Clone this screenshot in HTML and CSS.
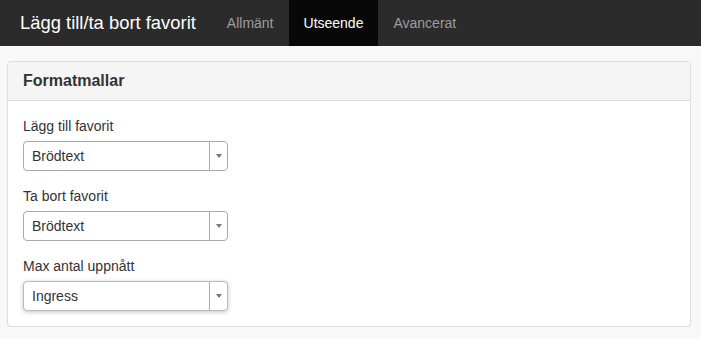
FILE: index.html
```html
<!DOCTYPE html>
<html lang="sv">
<head>
<meta charset="utf-8">
<title>Lägg till/ta bort favorit</title>
<link rel="stylesheet" href="styles.css">
</head>
<body>
<nav class="navbar">
  <span class="brand">Lägg till/ta bort favorit</span>
  <ul class="nav">
    <li><a class="nav-link">Allmänt</a></li>
    <li><a class="nav-link active">Utseende</a></li>
    <li><a class="nav-link">Avancerat</a></li>
  </ul>
</nav>
<main class="content">
  <section class="panel">
    <header class="panel-heading"><h3 class="panel-title">Formatmallar</h3></header>
    <div class="panel-body">
      <div class="form-group">
        <label class="label">Lägg till favorit</label>
        <div class="select"><span class="select-text">Brödtext</span><span class="select-arrow"><span class="tri"></span></span></div>
      </div>
      <div class="form-group">
        <label class="label">Ta bort favorit</label>
        <div class="select"><span class="select-text">Brödtext</span><span class="select-arrow"><span class="tri"></span></span></div>
      </div>
      <div class="form-group last">
        <label class="label">Max antal uppnått</label>
        <div class="select focused"><span class="select-text">Ingress</span><span class="select-arrow"><span class="tri"></span></span></div>
      </div>
    </div>
  </section>
</main>
</body>
</html>
```

FILE: styles.css
```css
* { box-sizing: border-box; }
html, body { margin: 0; padding: 0; }
body {
  background: #f8f8f8;
  font-family: "Liberation Sans", Arial, Helvetica, sans-serif;
  font-size: 14px;
  color: #333;
  line-height: 20px;
}
.navbar {
  display: flex;
  align-items: stretch;
  height: 46px;
  background: #2b2b2b;
}
.brand {
  display: flex;
  align-items: center;
  padding: 0 15px 0 20px;
  font-size: 18.4px;
  color: #fff;
}
.nav {
  display: flex;
  list-style: none;
  margin: 0;
  padding: 0 0 0 1px;
}
.nav li { display: flex; }
.nav-link {
  display: flex;
  align-items: center;
  padding: 0 15px;
  color: #9d9d9d;
  font-size: 14px;
}
.nav-link.active {
  background: #080808;
  color: #fff;
}
.content {
  padding: 15px 10px 0 7px;
}
.panel {
  background: #fff;
  border: 1px solid #ddd;
  border-radius: 4px;
  box-shadow: 0 1px 1px rgba(0,0,0,0.05);
}
.panel-heading {
  background: #f5f5f5;
  border-bottom: 1px solid #ddd;
  border-radius: 3px 3px 0 0;
  height: 39px;
  padding: 0 15px;
  display: flex;
  align-items: center;
}
.panel-title {
  margin: 0;
  font-size: 16px;
  font-weight: bold;
  color: #333;
  line-height: 18px;
}
.panel-body {
  padding: 15px;
}
.form-group {
  display: flex;
  flex-direction: column;
  align-items: flex-start;
  margin-bottom: 15px;
}
.form-group.last { margin-bottom: 0; }
.label {
  display: block;
  margin-bottom: 5px;
  line-height: 20px;
  color: #333;
}
.select {
  display: flex;
  width: 205px;
  height: 30px;
  border: 1px solid #aaa;
  border-radius: 4px;
  background: #fff;
}
.select.focused {
  box-shadow: 0 1px 4px rgba(0,0,0,0.25);
  border-color: #bbb;
}
.select-text {
  flex: 1;
  display: flex;
  align-items: center;
  padding-left: 8px;
  color: #333;
}
.select-arrow {
  width: 18px;
  border-left: 1px solid #aaa;
  display: flex;
  align-items: center;
  justify-content: center;
}
.tri {
  width: 0;
  height: 0;
  border-left: 3.5px solid transparent;
  border-right: 3.5px solid transparent;
  border-top: 4px solid #777;
}
```
